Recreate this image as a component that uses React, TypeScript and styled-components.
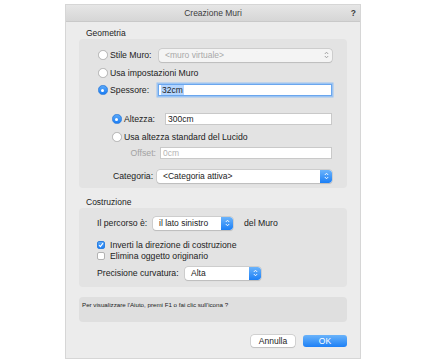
import styled, { createGlobalStyle } from "styled-components";

const Global = createGlobalStyle`
  html, body { margin: 0; padding: 0; background: #ffffff; }
  body { font-family: "Liberation Sans", Arial, sans-serif; color: #222; }
  * { box-sizing: border-box; }
`;

const Page = styled.div`
  width: 432px;
  height: 364px;
  padding: 5px 0 0 66px;
`;

const Dialog = styled.div`
  width: 294px;
  height: 353px;
  background: #ececec;
  display: flex;
  flex-direction: column;
  box-shadow: 0 0 0 1px #d6d6d6;
`;

const TitleBar = styled.div`
  height: 17px;
  display: grid;
  grid-template-columns: 1fr auto 1fr;
  align-items: center;
  background: linear-gradient(#e6e6e6, #d6d6d6);
  border-bottom: 1px solid #c9c9c9;
  font-size: 8.5px;
  color: #3c3c3c;
  padding: 0 4px;
`;

const Help = styled.span`
  justify-self: end;
  font-weight: bold;
  font-size: 8.5px;
`;

const Body = styled.div`
  padding: 0 13px;
  display: flex;
  flex-direction: column;
`;

const SectionLabel = styled.div<{ $top: number }>`
  margin-top: ${(p) => p.$top}px;
  height: 11px;
  line-height: 11px;
  padding-left: 7px;
  font-size: 8.5px;
`;

const GroupBox = styled.div<{ $h: number }>`
  height: ${(p) => p.$h}px;
  background: #e3e3e3;
  border-radius: 4px;
  display: flex;
  flex-direction: column;
`;

const Row = styled.div<{ $top: number; $indent: number; $h?: number }>`
  display: flex;
  align-items: center;
  height: ${(p) => p.$h ?? 14}px;
  margin-top: ${(p) => p.$top}px;
  padding-left: ${(p) => p.$indent}px;
  padding-right: 15px;
  font-size: 8.7px;
  white-space: nowrap;
`;

const Label = styled.div<{ $w?: number; $right?: boolean; $off?: boolean }>`
  display: flex;
  align-items: center;
  gap: 2.5px;
  flex: none;
  width: ${(p) => (p.$w ? `${p.$w}px` : "auto")};
  justify-content: ${(p) => (p.$right ? "flex-end" : "flex-start")};
  padding-right: ${(p) => (p.$right ? 4 : 0)}px;
  color: ${(p) => (p.$off ? "#a2a2a2" : "#222")};
`;

const Radio = styled.span<{ $on?: boolean }>`
  width: 9.5px;
  height: 9.5px;
  border-radius: 50%;
  flex: none;
  display: flex;
  align-items: center;
  justify-content: center;
  background: ${(p) => (p.$on ? "linear-gradient(#5aa8f8, #1c7ef5)" : "#fff")};
  border: 1px solid ${(p) => (p.$on ? "#2d7fe0" : "#b2b2b2")};
  &::after {
    content: "";
    width: 3px;
    height: 3px;
    border-radius: 50%;
    background: #fff;
    display: ${(p) => (p.$on ? "block" : "none")};
  }
`;

const Check = styled.span<{ $on?: boolean }>`
  width: 8px;
  height: 8px;
  border-radius: 2px;
  flex: none;
  margin-right: 5px;
  display: flex;
  align-items: center;
  justify-content: center;
  background: ${(p) => (p.$on ? "linear-gradient(#5aa8f8, #1c7ef5)" : "#fff")};
  border: 1px solid ${(p) => (p.$on ? "#2d7fe0" : "#b2b2b2")};
`;

const Field = styled.div<{ $focus?: boolean; $off?: boolean }>`
  flex: 1;
  height: 12px;
  background: #fff;
  border: 1px solid ${(p) => (p.$focus ? "#6aa6ee" : "#c9c9c9")};
  box-shadow: ${(p) => (p.$focus ? "0 0 0 1.5px #9cc4f2" : "none")};
  display: flex;
  align-items: center;
  padding-left: 2px;
  font-size: 8.5px;
  color: ${(p) => (p.$off ? "#b4b4b4" : "#222")};
`;

const Selected = styled.span`
  background: #b4d5fe;
  padding: 0 1px;
`;

const Popup = styled.div<{ $w?: number; $off?: boolean }>`
  flex: ${(p) => (p.$w ? "none" : "1")};
  width: ${(p) => (p.$w ? `${p.$w}px` : "auto")};
  height: 13px;
  display: flex;
  align-items: stretch;
  background: ${(p) => (p.$off ? "#f4f4f4" : "#fff")};
  border-radius: 3px;
  box-shadow: 0 0 0 0.5px #b9b9b9, 0 0.5px 1px rgba(0, 0, 0, 0.15);
  font-size: 8.5px;
  color: ${(p) => (p.$off ? "#a8a8a8" : "#222")};
  overflow: hidden;
`;

const PopupText = styled.span`
  flex: 1;
  padding-left: 6px;
  display: flex;
  align-items: center;
`;

const Arrows = styled.span<{ $off?: boolean }>`
  width: 12px;
  flex: none;
  display: flex;
  align-items: center;
  justify-content: center;
  background: ${(p) => (p.$off ? "transparent" : "linear-gradient(#6cb4fb, #1b7ff6)")};
  border-radius: 0 3px 3px 0;
`;

const After = styled.span`
  margin-left: 11px;
`;

const HelpBox = styled.div`
  margin-top: 10px;
  height: 25px;
  background: #dfdfdf;
  border-radius: 4px;
  padding: 4px 3px;
  font-size: 6.2px;
  color: #222;
  white-space: nowrap;
`;

const Buttons = styled.div`
  margin-top: 13px;
  display: flex;
  justify-content: flex-end;
  gap: 8px;
`;

const Button = styled.div<{ $primary?: boolean }>`
  width: 44px;
  height: 12px;
  border-radius: 3px;
  display: flex;
  align-items: center;
  justify-content: center;
  font-size: 8.5px;
  color: ${(p) => (p.$primary ? "#fff" : "#222")};
  background: ${(p) => (p.$primary ? "linear-gradient(#6ab3fa, #1d80f6)" : "#fff")};
  box-shadow: ${(p) =>
    p.$primary ? "none" : "0 0 0 0.5px #b9b9b9, 0 0.5px 1px rgba(0,0,0,0.15)"};
`;

function Chevrons({ off }: { off?: boolean }) {
  const c = off ? "#9a9a9a" : "#fff";
  return (
    <svg width="5" height="8" viewBox="0 0 5 8">
      <path d="M0.8 3 L2.5 1.2 L4.2 3 M0.8 5 L2.5 6.8 L4.2 5" fill="none" stroke={c} strokeWidth="0.9" />
    </svg>
  );
}

function Tick() {
  return (
    <svg width="6" height="6" viewBox="0 0 6 6">
      <path d="M1 3.2 L2.4 4.6 L5 1.2" fill="none" stroke="#fff" strokeWidth="1.1" />
    </svg>
  );
}

function Select({ text, w, off }: { text: string; w?: number; off?: boolean }) {
  return (
    <Popup $w={w} $off={off}>
      <PopupText>{text}</PopupText>
      <Arrows $off={off}>
        <Chevrons off={off} />
      </Arrows>
    </Popup>
  );
}

export default function App() {
  return (
    <>
      <Global />
      <Page>
        <Dialog>
          <TitleBar>
            <span />
            <span>Creazione Muri</span>
            <Help>?</Help>
          </TitleBar>
          <Body>
            <SectionLabel $top={6}>Geometria</SectionLabel>
            <GroupBox $h={149}>
              <Row $top={9} $indent={19}>
                <Label $w={61}>
                  <Radio />
                  Stile Muro:
                </Label>
                <Select text="<muro virtuale>" off />
              </Row>
              <Row $top={4} $indent={19}>
                <Label>
                  <Radio />
                  Usa impostazioni Muro
                </Label>
              </Row>
              <Row $top={3} $indent={19}>
                <Label $w={60}>
                  <Radio $on />
                  Spessore:
                </Label>
                <Field $focus>
                  <Selected>32cm</Selected>
                </Field>
              </Row>
              <Row $top={15} $indent={33}>
                <Label $w={53}>
                  <Radio $on />
                  Altezza:
                </Label>
                <Field>300cm</Field>
              </Row>
              <Row $top={4} $indent={33}>
                <Label>
                  <Radio />
                  Usa altezza standard del Lucido
                </Label>
              </Row>
              <Row $top={2} $indent={33}>
                <Label $w={48} $right $off>
                  Offset:
                </Label>
                <Field $off>0cm</Field>
              </Row>
              <Row $top={9} $indent={34}>
                <Label $w={44}>Categoria:</Label>
                <Select text="<Categoria attiva>" />
              </Row>
            </GroupBox>

            <SectionLabel $top={9}>Costruzione</SectionLabel>
            <GroupBox $h={79}>
              <Row $top={8} $indent={18}>
                <Label $w={56}>Il percorso è:</Label>
                <Select text="il lato sinistro" w={80} />
                <After>del Muro</After>
              </Row>
              <Row $top={9} $indent={18} $h={11}>
                <Check $on>
                  <Tick />
                </Check>
                Inverti la direzione di costruzione
              </Row>
              <Row $top={0} $indent={18} $h={11}>
                <Check />
                Elimina oggetto originario
              </Row>
              <Row $top={5} $indent={18}>
                <Label $w={88}>Precisione curvatura:</Label>
                <Select text="Alta" w={76} />
              </Row>
            </GroupBox>

            <HelpBox>Per visualizzare l'Aiuto, premi F1 o fai clic sull'icona ?</HelpBox>

            <Buttons>
              <Button>Annulla</Button>
              <Button $primary>OK</Button>
            </Buttons>
          </Body>
        </Dialog>
      </Page>
    </>
  );
}
